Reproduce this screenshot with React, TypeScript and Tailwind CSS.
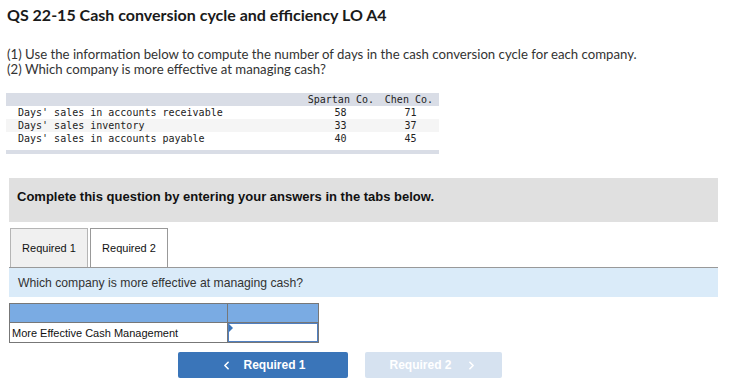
import { ChevronLeft, ChevronRight } from "lucide-react";

type Row = { label: string; spartan: number; chen: number };

const rows: Row[] = [
  { label: "Days' sales in accounts receivable", spartan: 58, chen: 71 },
  { label: "Days' sales inventory", spartan: 33, chen: 37 },
  { label: "Days' sales in accounts payable", spartan: 40, chen: 45 },
];

export default function App() {
  return (
    <div className="w-[753px] h-[391px] bg-white overflow-hidden text-[#333]">
      {/* heading */}
      <h1 className="pl-[7px] pt-[5px] text-[16px] leading-[20px] font-bold text-[#1a1a1a] font-['Lato',sans-serif]">
        QS 22-15 Cash conversion cycle and efficiency LO A4
      </h1>

      <div className="mt-[22px] pl-[7px] text-[13.2px] leading-[15px] font-['Lato',sans-serif] text-[#333]">
        <p>(1) Use the information below to compute the number of days in the cash conversion cycle for each company.</p>
        <p>(2) Which company is more effective at managing cash?</p>
      </div>

      {/* data table */}
      <div className="mt-[16px] ml-[6px] w-[433px] font-['DejaVu_Sans_Mono',monospace] text-[10px] leading-[13px] text-[#222]">
        <div className="grid grid-cols-[294px_79px_60px] h-[13px] bg-[#d9dde6]">
          <div />
          <div className="text-right pr-[5px]">Spartan Co.</div>
          <div className="text-right pr-[6px]">Chen Co.</div>
        </div>
        {rows.map((r, i) => (
          <div
            key={r.label}
            className={
              "grid grid-cols-[294px_79px_60px] h-[13px] " +
              (i === 1 ? "bg-[#f5f5f5]" : "bg-white")
            }
          >
            <div className="pl-[12px]">{r.label}</div>
            <div className="text-center pl-[2px]">{r.spartan}</div>
            <div className="text-center pl-[3px]">{r.chen}</div>
          </div>
        ))}
        <div className="mt-[5px] h-[4px] bg-[#d9dde6]" />
      </div>

      {/* instructions box */}
      <div className="mt-[24px] ml-[9px] w-[709px] h-[44px] bg-[#e0e0e0] pl-[8px] pt-[12px]">
        <span className="block leading-[14px] font-['Liberation_Sans',sans-serif] font-bold text-[13px] text-[#111]">
          Complete this question by entering your answers in the tabs below.
        </span>
      </div>

      {/* tabs */}
      <div className="mt-[6px] ml-[9px] w-[709px] flex items-end gap-[2px] pl-[1px] border-b border-[#999] font-['Liberation_Sans',sans-serif] text-[11px] text-[#111]">
        <div className="w-[78px] h-[39px] flex items-center justify-center pt-[1px] bg-[#f0f0f0] border border-b-0 border-[#b5b5b5]">
          Required 1
        </div>
        <div className="w-[78px] h-[39px] flex items-center justify-center pt-[1px] bg-white border border-b-0 border-[#999]">
          Required 2
        </div>
      </div>

      <div className="ml-[9px] w-[709px] h-[29px] bg-[#daebf9] flex items-center pl-[9px] pt-[2px] font-['Liberation_Sans',sans-serif] text-[12.2px] text-[#333]">
        Which company is more effective at managing cash?
      </div>

      {/* answer table */}
      <div className="mt-[6px] ml-[9px] w-[310px] border border-[#777] font-['Liberation_Sans',sans-serif] text-[11px] text-[#111]">
        <div className="grid grid-cols-[218px_1fr] h-[19px] bg-[#7aabe3] border-b border-[#777]">
          <div className="border-r border-[#777]" />
          <div />
        </div>
        <div className="grid grid-cols-[218px_1fr] h-[19px]">
          <div className="border-r border-[#777] pl-[2px] pt-[1px] flex items-center">More Effective Cash Management</div>
          <div className="relative border border-[#4f7fc1]">
            <div className="absolute left-0 top-0 w-0 h-0 border-t-[4px] border-b-[4px] border-l-[4px] border-t-transparent border-b-transparent border-l-[#3a75b9]" />
          </div>
        </div>
      </div>

      {/* nav buttons */}
      <div className="mt-[9px] ml-[178px] flex gap-[17px] font-['Liberation_Sans',sans-serif] font-bold text-[12px] text-white">
        <button className="w-[170px] h-[26px] rounded-[2px] bg-[#3a75b9] flex items-center justify-center gap-[10px]">
          <ChevronLeft size={13} strokeWidth={3} />
          <span>Required 1</span>
        </button>
        <button className="w-[137px] h-[26px] rounded-[2px] bg-[#d6e2f0] flex items-center justify-center gap-[13px]">
          <span>Required 2</span>
          <ChevronRight size={13} strokeWidth={3} />
        </button>
      </div>
    </div>
  );
}
